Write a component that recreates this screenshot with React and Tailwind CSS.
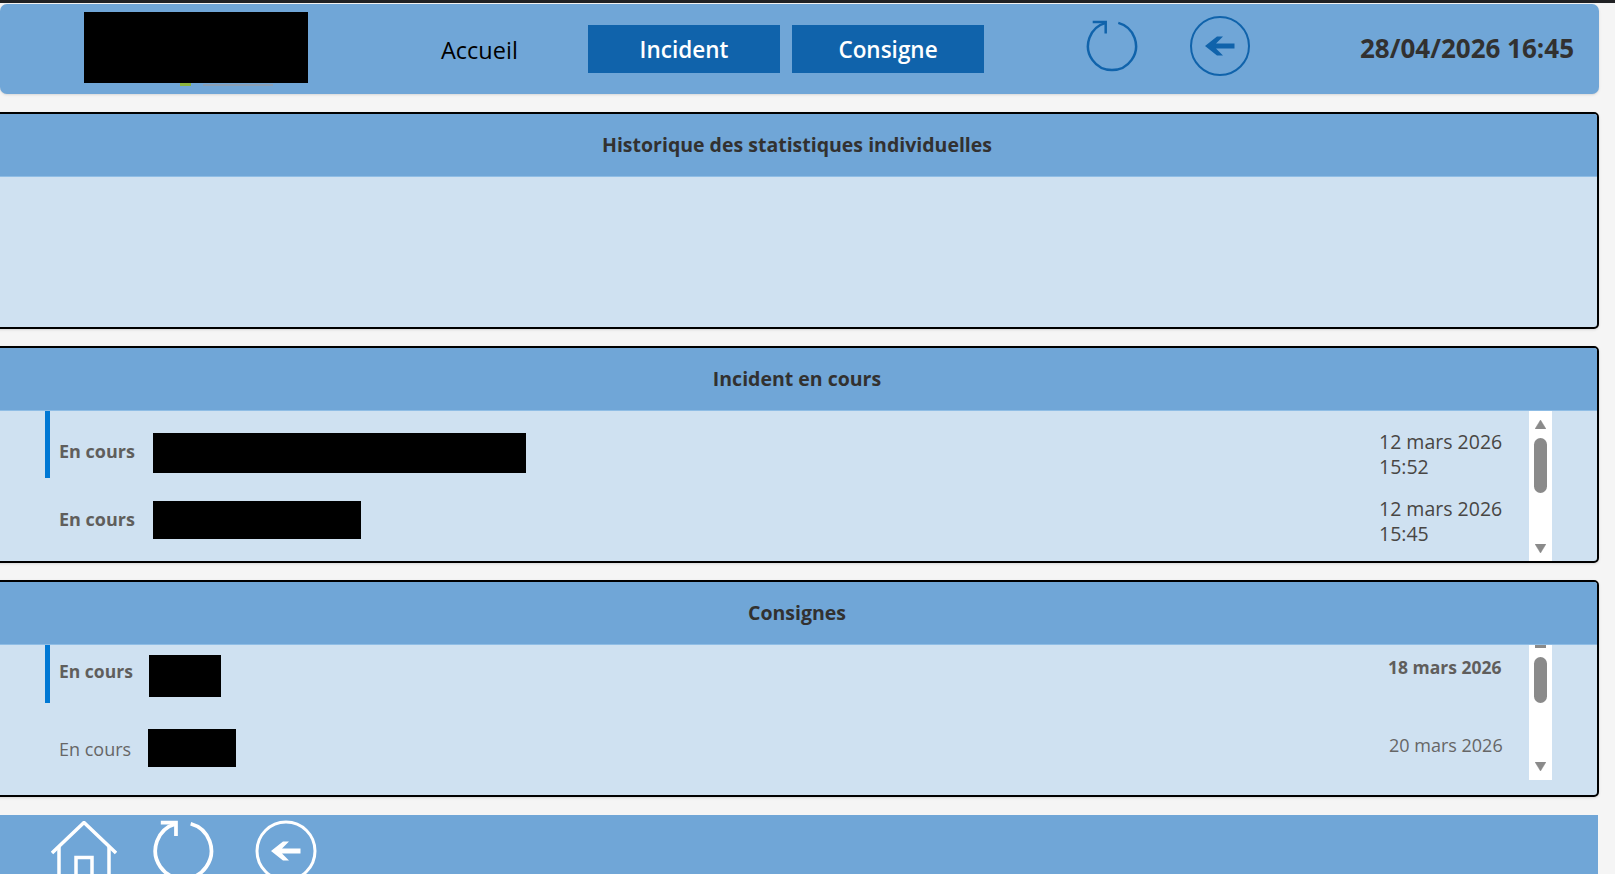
import React from 'react'

const BLUE = '#1063ab'

const RefreshIcon = ({ color, width, size = 54, className }) => (
  <svg width={size} height={size} viewBox="0 0 54 54" fill="none" stroke={color} strokeWidth={width} className={className}>
    <path d="M32.3 4.9A24 24 0 1 1 19.7 4.9" />
    <path d="M6.7 4H19.7V15.5" />
  </svg>
)

const BackIcon = ({ color, width, className }) => (
  <svg width="62" height="62" viewBox="-31 -31 62 62" fill="none" className={className}>
    <circle r="29" stroke={color} strokeWidth={width} />
    <path d="M-15 0L-3 -9.5H3L-4 -2.5H14.5V2.5H-4L3 9.5H-3Z" fill={color} />
  </svg>
)

const HomeIcon = ({ className }) => (
  <svg width="66" height="66" viewBox="0 0 66 66" fill="none" stroke="white" strokeWidth="3.5" className={className}>
    <path d="M1 32L33 1.5L65 32" />
    <path d="M8 26V66M58 26V66" />
    <path d="M25 66V36.5H41V66" />
  </svg>
)

const ScrollArrow = ({ up, className }) => (
  <svg width="11" height="9" viewBox="0 0 11 9" className={className}>
    <path d={up ? 'M5.5 0L11 9H0Z' : 'M0 0H11L5.5 9Z'} fill="#8a8a8a" stroke="#8a8a8a" strokeLinejoin="round" strokeWidth="0.5" />
  </svg>
)

const Panel = ({ title, children }) => (
  <section className="-ml-2 h-[217px] shrink-0 rounded-[5px] border-2 border-black bg-[#cfe1f1] overflow-hidden shadow-sm">
    <div className="h-[63px] flex items-center justify-center bg-[#70a6d7] border-b border-[#8fbde5] pl-[3px] pb-[1px] text-[19.5px] font-bold text-[#323130]">
      {title}
    </div>
    <div className="h-[150px] flex overflow-hidden">{children}</div>
  </section>
)

const Header = () => (
  <header className="relative mt-[1px] h-[90px] w-[1599px] shrink-0 flex items-center rounded-[7px] bg-[#70a6d7] shadow-sm">
    <div className="ml-[84px] -mt-[3px] h-[71px] w-[224px] bg-black" />
    <div className="absolute left-[180px] top-[79px] h-[3px] w-[11px] bg-[#8cb43c]" />
    <div className="absolute left-[203px] top-[80px] h-[2px] w-[70px] bg-[#8a9fb5]" />
    <div className="ml-[133px] mt-[3px] w-[77px] text-[23.5px] leading-none font-medium text-black whitespace-nowrap">Accueil</div>
    <button className="ml-[70px] h-[48px] w-[192px] bg-[#1063ab] pt-[2px] text-[22.5px] font-semibold text-white">Incident</button>
    <button className="ml-[12px] h-[48px] w-[192px] bg-[#1063ab] pt-[2px] text-[22.5px] font-semibold text-white">Consigne</button>
    <RefreshIcon color={BLUE} width="2.5" className="ml-[102px] -mt-[8px]" />
    <BackIcon color={BLUE} width="2" className="ml-[49px] -mt-[6px]" />
    <div className="ml-auto mr-[25px] -mt-[2px] text-[26px] font-bold text-[#323130] whitespace-nowrap">28/04/2026 16:45</div>
  </header>
)

export default function App() {
  return (
    <div className="h-[874px] w-[1615px] overflow-hidden flex flex-col bg-[#f5f5f5] font-['Open_Sans',sans-serif]">
      <div className="h-[3px] shrink-0 bg-[#202124]" />
      <Header />

      <div className="mt-[18px] w-[1599px] flex flex-col gap-[17px]">
        <Panel title="Historique des statistiques individuelles" />

        <Panel title="Incident en cours">
          <div className="flex-1 min-w-0">
            <div className="ml-[51px] h-[67px] flex border-l-[5px] border-[#0078d4] pl-[9px]">
              <div className="mt-[28px] w-[94px] text-[18px] leading-6 font-bold text-[#605e5c]">En cours</div>
              <div className="mt-[22px] h-[40px] w-[373px] bg-black" />
              <div className="ml-auto mt-[18px] w-[150px] text-[19.5px] leading-[25px] text-[#484644]">
                12 mars 2026<br />15:52
              </div>
            </div>
            <div className="ml-[51px] h-[83px] flex border-l-[5px] border-transparent pl-[9px]">
              <div className="mt-[29px] w-[94px] text-[18px] leading-6 font-bold text-[#605e5c]">En cours</div>
              <div className="mt-[23px] h-[38px] w-[208px] bg-black" />
              <div className="ml-auto mt-[18px] w-[150px] text-[19.5px] leading-[25px] text-[#484644]">
                12 mars 2026<br />15:45
              </div>
            </div>
          </div>
          <div className="mr-[45px] h-[150px] w-[23px] flex flex-col items-center bg-white">
            <ScrollArrow up className="mt-[9px] shrink-0" />
            <div className="mt-[9px] h-[55px] w-[13px] rounded-full bg-[#8a8a8a]" />
            <ScrollArrow className="mt-auto mb-[8px] shrink-0" />
          </div>
        </Panel>

        <Panel title="Consignes">
          <div className="flex-1 min-w-0">
            <div className="ml-[51px] h-[58px] flex border-l-[5px] border-[#0078d4] pl-[9px]">
              <div className="mt-[14px] w-[90px] text-[17.5px] leading-6 font-bold text-[#605e5c]">En cours</div>
              <div className="mt-[10px] h-[42px] w-[72px] bg-black" />
              <div className="ml-auto mt-[10px] w-[141px] text-[17.5px] leading-6 font-bold text-[#605e5c]">18 mars 2026</div>
            </div>
            <div className="ml-[51px] h-[92px] flex border-l-[5px] border-transparent pl-[9px]">
              <div className="mt-[34px] w-[89px] text-[18px] leading-6 text-[#666666]">En cours</div>
              <div className="mt-[26px] h-[38px] w-[88px] bg-black" />
              <div className="ml-auto mt-[30px] w-[140px] text-[18px] leading-6 text-[#666666]">20 mars 2026</div>
            </div>
          </div>
          <div className="mr-[45px] h-[135px] w-[23px] flex flex-col items-center bg-white">
            <div className="h-[3px] w-[11px] shrink-0 bg-[#8a8a8a]" />
            <div className="mt-[9px] h-[46px] w-[13px] rounded-full bg-[#8a8a8a]" />
            <ScrollArrow className="mt-auto mb-[9px] shrink-0" />
          </div>
        </Panel>
      </div>

      <footer className="mt-[18px] w-[1598px] flex-1 min-h-0 flex items-start overflow-hidden bg-[#70a6d7] pl-[51px] pt-[6px]">
        <HomeIcon className="shrink-0" />
        <RefreshIcon color="white" width="3.2" size={63} className="ml-[36px] -mt-[3px] shrink-0" />
        <BackIcon color="white" width="3" className="ml-[39px] -mt-[1px] shrink-0" />
      </footer>
    </div>
  )
}
